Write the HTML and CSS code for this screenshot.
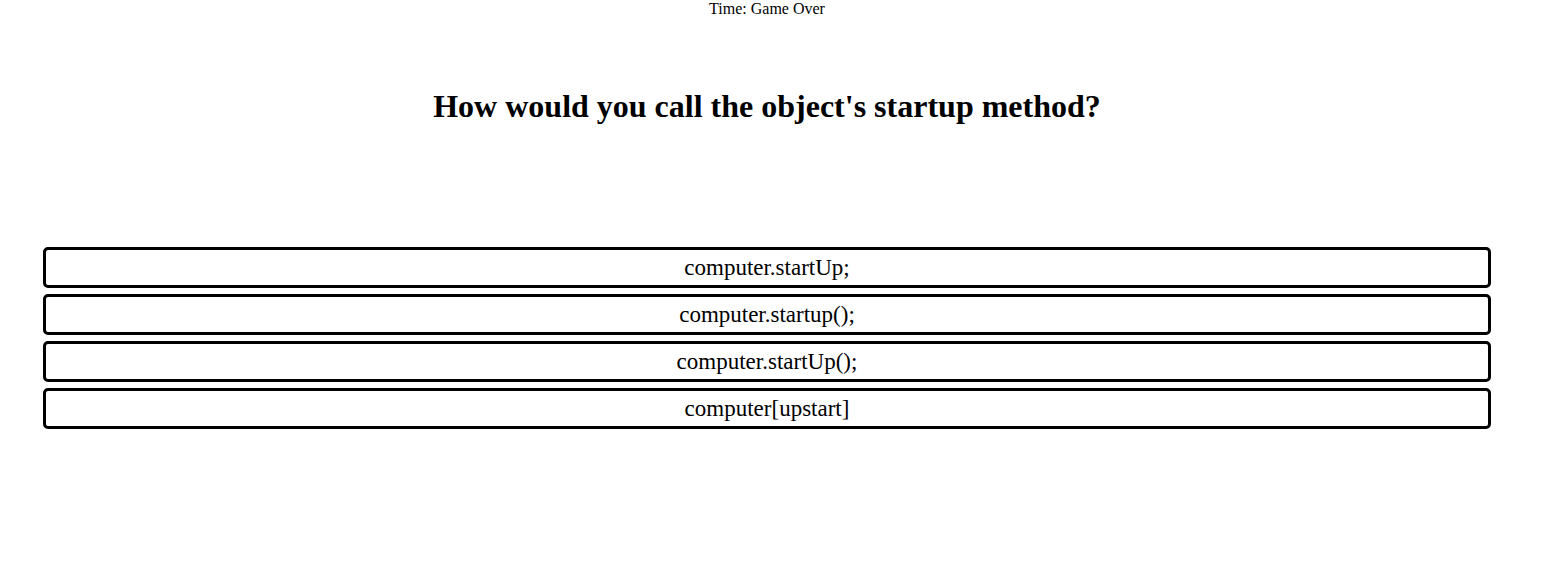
FILE: index.html
```html
<!DOCTYPE html>
<html>
<head>
<meta charset="utf-8">
<link rel="stylesheet" href="styles.css">
<title>Quiz</title>
</head>
<body>
<div class="page">
  <div class="timer">Time: Game Over</div>
  <h1 class="question">How would you call the object's startup method?</h1>
  <div class="answers">
    <button class="answer">computer.startUp;</button>
    <button class="answer">computer.startup();</button>
    <button class="answer">computer.startUp();</button>
    <button class="answer">computer[upstart]</button>
  </div>
</div>
</body>
</html>
```

FILE: styles.css
```css
html, body {
  margin: 0;
  padding: 0;
  background: #fff;
}
body {
  font-family: "Liberation Serif", "Times New Roman", serif;
  color: #000;
}
.page {
  width: 1534px;
  display: flex;
  flex-direction: column;
  align-items: center;
}
.timer {
  font-size: 16px;
  line-height: 18px;
  text-align: center;
}
.question {
  font-size: 32px;
  font-weight: bold;
  margin: 70px 0 0 0;
  text-align: center;
}
.answers {
  margin-top: 122px;
  width: 1448px;
  display: flex;
  flex-direction: column;
  gap: 6px;
}
.answer {
  display: block;
  width: 100%;
  height: 41px;
  border: 3px solid #000;
  border-radius: 5px;
  background: #fff;
  font-family: "Liberation Serif", "Times New Roman", serif;
  font-size: 23px;
  color: #000;
  padding: 0;
  text-align: center;
}
```
